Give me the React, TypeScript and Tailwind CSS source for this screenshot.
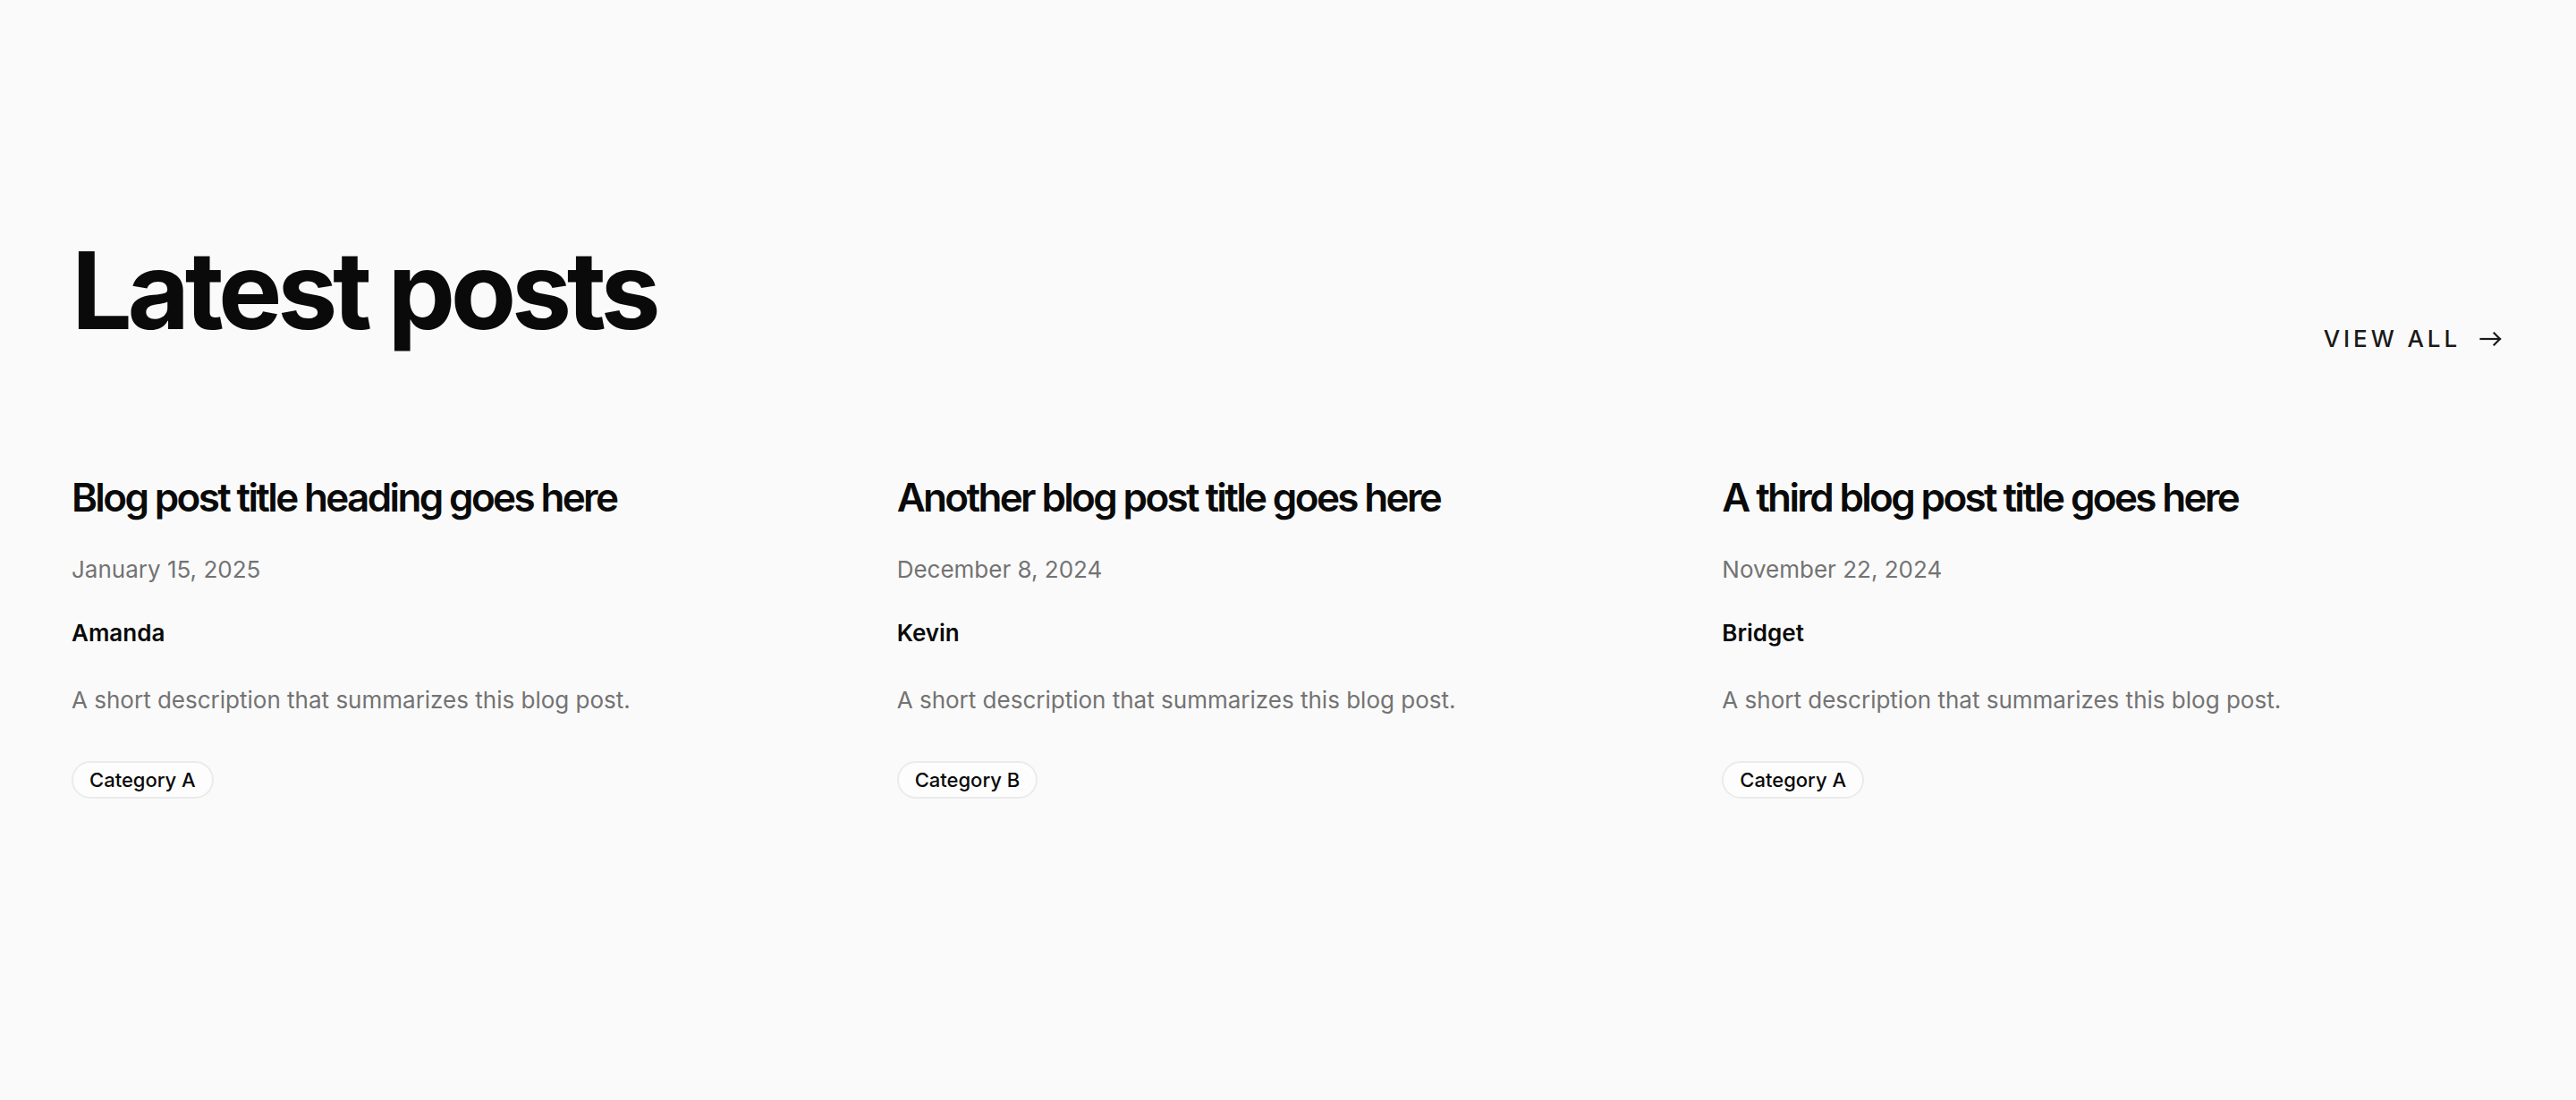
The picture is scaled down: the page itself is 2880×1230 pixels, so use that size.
import React from "react";

type Post = {
  title: string;
  date: string;
  author: string;
  description: string;
  category: string;
};

const posts: Post[] = [
  {
    title: "Blog post title heading goes here",
    date: "January 15, 2025",
    author: "Amanda",
    description: "A short description that summarizes this blog post.",
    category: "Category A",
  },
  {
    title: "Another blog post title goes here",
    date: "December 8, 2024",
    author: "Kevin",
    description: "A short description that summarizes this blog post.",
    category: "Category B",
  },
  {
    title: "A third blog post title goes here",
    date: "November 22, 2024",
    author: "Bridget",
    description: "A short description that summarizes this blog post.",
    category: "Category A",
  },
];

function ArrowRight() {
  return (
    <svg
      width="28"
      height="16"
      viewBox="0 0 28 16"
      fill="none"
      stroke="currentColor"
      strokeWidth="2.2"
      strokeLinecap="square"
      strokeLinejoin="miter"
      aria-hidden="true"
    >
      <path d="M1.5 8H23" />
      <path d="M16.5 1.5L23 8L16.5 14.5" />
    </svg>
  );
}

function PostCard({ post }: { post: Post }) {
  return (
    <article className="flex flex-col items-start">
      <h3 className="text-[44px] leading-[1.2] font-semibold tracking-[-0.06em] text-[#0a0a0a]">
        {post.title}
      </h3>
      <p className="mt-[34px] text-[26px] leading-[1.5] tracking-normal text-[#737373]">
        {post.date}
      </p>
      <p className="mt-[32px] text-[26px] leading-[1.5] font-semibold tracking-normal text-[#0a0a0a]">
        {post.author}
      </p>
      <p className="mt-[36px] text-[26px] leading-[1.5] tracking-normal text-[#737373]">
        {post.description}
      </p>
      <span className="mt-[49px] flex h-[42px] items-center rounded-full border-2 border-[#ebebeb] bg-[#fdfdfd] px-[18px] text-[22px] leading-none font-medium tracking-normal text-[#0a0a0a]">
        {post.category}
      </span>
    </article>
  );
}

export default function App() {
  return (
    <div
      className="min-h-screen bg-[#fafafa] px-20 pt-[257px] pb-20"
      style={{ fontFamily: "Inter, 'Liberation Sans', sans-serif" }}
    >
      <header className="flex items-end justify-between">
        <h2 className="text-[120px] leading-[135px] font-bold tracking-[-0.045em] text-[#0a0a0a]">
          Latest posts
        </h2>
        <a
          href="#"
          className="flex items-center gap-[21px] text-[26px] leading-none font-medium tracking-[0.15em] text-[#1a1a1a]"
        >
          <span>VIEW ALL</span>
          <ArrowRight />
        </a>
      </header>

      <section className="mt-[138px] grid grid-cols-3 gap-12">
        {posts.map((post) => (
          <PostCard key={post.title} post={post} />
        ))}
      </section>
    </div>
  );
}
